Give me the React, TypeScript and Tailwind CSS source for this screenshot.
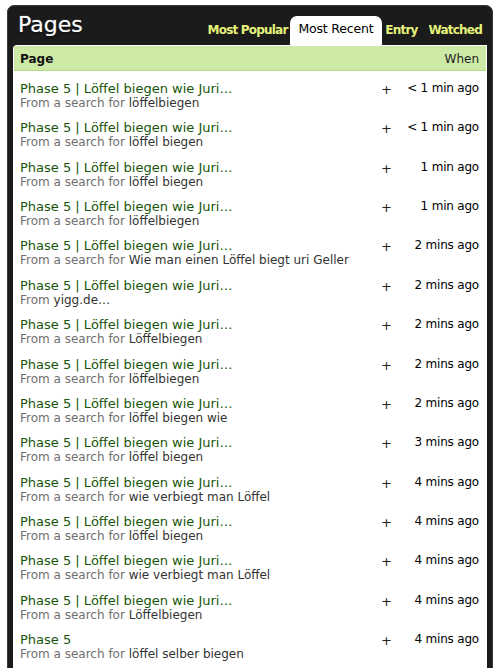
import React from "react";

const rows: { title: string; pre: string; q: string; when: string }[] = [
  { title: "Phase 5 | Löffel biegen wie Juri…", pre: "From a search for ", q: "löffelbiegen", when: "< 1 min ago" },
  { title: "Phase 5 | Löffel biegen wie Juri…", pre: "From a search for ", q: "löffel biegen", when: "< 1 min ago" },
  { title: "Phase 5 | Löffel biegen wie Juri…", pre: "From a search for ", q: "löffel biegen", when: "1 min ago" },
  { title: "Phase 5 | Löffel biegen wie Juri…", pre: "From a search for ", q: "löffelbiegen", when: "1 min ago" },
  { title: "Phase 5 | Löffel biegen wie Juri…", pre: "From a search for ", q: "Wie man einen Löffel biegt uri Geller", when: "2 mins ago" },
  { title: "Phase 5 | Löffel biegen wie Juri…", pre: "From ", q: "yigg.de…", when: "2 mins ago" },
  { title: "Phase 5 | Löffel biegen wie Juri…", pre: "From a search for ", q: "Löffelbiegen", when: "2 mins ago" },
  { title: "Phase 5 | Löffel biegen wie Juri…", pre: "From a search for ", q: "löffelbiegen", when: "2 mins ago" },
  { title: "Phase 5 | Löffel biegen wie Juri…", pre: "From a search for ", q: "löffel biegen wie", when: "2 mins ago" },
  { title: "Phase 5 | Löffel biegen wie Juri…", pre: "From a search for ", q: "löffel biegen", when: "3 mins ago" },
  { title: "Phase 5 | Löffel biegen wie Juri…", pre: "From a search for ", q: "wie verbiegt man Löffel", when: "4 mins ago" },
  { title: "Phase 5 | Löffel biegen wie Juri…", pre: "From a search for ", q: "löffel biegen", when: "4 mins ago" },
  { title: "Phase 5 | Löffel biegen wie Juri…", pre: "From a search for ", q: "wie verbiegt man Löffel", when: "4 mins ago" },
  { title: "Phase 5 | Löffel biegen wie Juri…", pre: "From a search for ", q: "Löffelbiegen", when: "4 mins ago" },
  { title: "Phase 5", pre: "From a search for ", q: "löffel selber biegen", when: "4 mins ago" },
];

export default function App() {
  return (
    <div className="w-[500px] h-[668px] bg-white overflow-hidden" style={{ fontFamily: '"DejaVu Sans", sans-serif' }}>
      <div className="ml-[7px] mt-[5px] w-[486px] h-[700px] bg-[#1b1b1b] rounded-t-[7px] border border-[#3a3a3a] px-[5px]">
        <div className="flex items-end justify-between h-[39px]">
          <div className="text-white text-[22px] leading-none pl-[5px] pb-[9px] [text-shadow:0_1px_2px_#000,0_0_1px_#fff]">Pages</div>
          <div className="flex items-end text-[12px] font-bold text-[#e6f27a] tracking-[-0.8px]">
            <div className="pl-[4px] pr-[2px] pb-[6px]">Most Popular</div>
            <div className="bg-white text-black font-normal rounded-t-[7px] px-[9px] pt-[4px] pb-[6px] text-[12.5px] tracking-[-0.2px]">Most Recent</div>
            <div className="pl-[3px] pr-[2px] pb-[6px]">Entry</div>
            <div className="pl-[9px] pr-[5px] pb-[6px]">Watched</div>
          </div>
        </div>
        <div className="bg-white rounded-tl-[4px] h-[640px] pt-[1px] px-[1px]">
          <div className="bg-[#cde9a6] h-[25px] flex items-center justify-between px-[6px] text-[12px] border-b border-[#b5d98a]">
            <span className="font-bold text-[#111] pt-[2px]">Page</span>
            <span className="text-[#222] pr-[1px] pt-[2px]">When</span>
          </div>
          <div className="pt-[10px]">
            {rows.map((r, i) => (
              <div key={i} className="flex h-[39.37px] pl-[6px] pr-[7px]">
                <div className="flex-1 min-w-0">
                  <div className="text-[13px] leading-[15px] text-[#18550a] whitespace-nowrap">{r.title}</div>
                  <div className="text-[12px] leading-[15px] whitespace-nowrap">
                    <span className="text-[#6f6f6f]">{r.pre}</span>
                    <span className="text-[#333]">{r.q}</span>
                  </div>
                </div>
                <div className="w-[20px] text-[13px] leading-[15px] text-[#222] pt-[1px]">+</div>
                <div className="w-[78px] text-right text-[12px] leading-[15px] text-black tracking-[-0.2px]">{r.when}</div>
              </div>
            ))}
          </div>
        </div>
      </div>
    </div>
  );
}
